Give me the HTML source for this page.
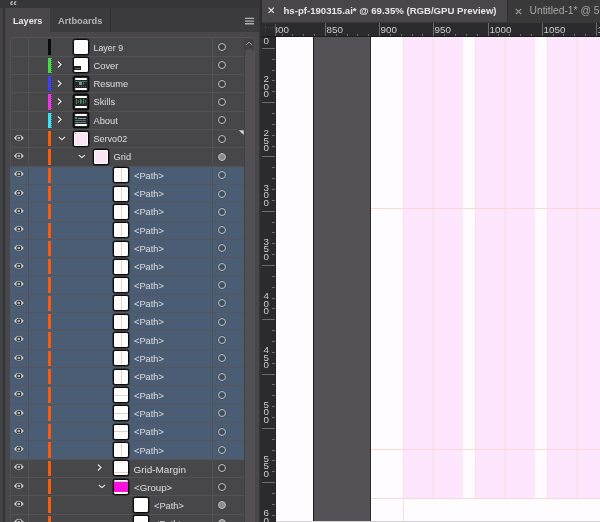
<!DOCTYPE html><html><head><meta charset="utf-8"><style>
*{margin:0;padding:0;box-sizing:border-box}
html,body{width:600px;height:522px;overflow:hidden;background:#464646;font-family:"Liberation Sans",sans-serif}
#root{position:absolute;left:0;top:0;width:600px;height:522px;will-change:transform}
.a{position:absolute}
#topstrip{left:0;top:0;width:259px;height:8.4px;background:#363538}
#lstrip{left:0;top:8px;width:3px;height:514px;background:#434245}
#lstrip2{left:3px;top:8px;width:2px;height:514px;background:#343337}
#panel{left:5px;top:8px;width:254px;height:514px;background:#49474a}
#tabs{left:5px;top:8px;width:254px;height:24px;background:#3b3a3d}
#tabL{left:5px;top:8px;width:45px;height:24px;background:#49474a}
.tabt{font-size:9.3px;line-height:12px;white-space:nowrap}
#divstrip{left:259px;top:0;width:3px;height:522px;background:linear-gradient(90deg,#3a393c,#2e2d30 50%,#2a2a2c)}
#doctabs{left:262px;top:0;width:338px;height:23px;background:#393939}
#doctabA{left:262px;top:0;width:245px;height:22px;background:#484649}
#hruler{left:262px;top:23px;width:338px;height:14px;background:#2b2a2c}
#vruler{left:262px;top:37px;width:14px;height:485px;background:#2b2a2c}
#canvas{left:276px;top:37px;width:324px;height:485px;background:#fefcfe}
.rowbg{left:10px;width:234px;}
.txt{font-size:9.3px;color:#d8d8d8;white-space:nowrap;line-height:11px;-webkit-text-stroke:0.05px #d8d8d8}
.bar{width:3px}
.th{width:16px;height:16px;border:1.2px solid #080808;border-radius:2.2px;background:#fff;overflow:hidden;box-shadow:0 0 0 0.5px #1a1a1a}
.circ{width:8px;height:8px;border:1.25px solid #c4c4c4;border-radius:50%;background:rgba(15,15,20,0.2);box-shadow:0 0 0 0.6px rgba(30,30,30,0.45)}
.rt{font-size:9.8px;color:#cfcfcf;line-height:10px;white-space:nowrap}
</style></head><body><div id="root"><div class="a" id="topstrip"></div>
<div class="a" id="lstrip"></div><div class="a" id="lstrip2"></div>
<div class="a" id="panel"></div>
<div class="a" id="tabs"></div><div class="a" id="tabL"></div>
<svg class="a" style="left:9.8px;top:0.8px" width="7" height="4.6" viewBox="0 0 7 4.6"><path d="M2.7 0.4 Q0.6 1.6 0.9 2.3 Q0.6 3 2.7 4.2 M6.2 0.4 Q4.1 1.6 4.4 2.3 Q4.1 3 6.2 4.2" stroke="#bcbcbc" stroke-width="1.3" fill="none"/></svg>
<div class="a tabt" style="left:13px;top:14.5px;color:#e8e8e8;font-weight:bold;font-size:9.1px">Layers</div>
<div class="a tabt" style="left:58px;top:14.5px;color:#b4b4b4;font-weight:bold;font-size:9.3px">Artboards</div>
<div class="a" style="left:110px;top:8px;width:1px;height:24px;background:#2f2f2f"></div>
<svg class="a" style="left:245px;top:16.5px" width="9" height="8" viewBox="0 0 9 8"><path d="M0 1.45H9M0 4.1H9M0 6.75H9" stroke="#b0b0b4" stroke-width="1.3"/></svg>
<div class="a" style="left:10px;top:37px;width:245px;height:490px;border:1px solid #535353;border-radius:3px;background:#474649"></div>
<div class="a rowbg" style="top:166.04px;height:293.12px;background:#4b5d74"></div>
<div class="a" style="left:10px;top:55.62px;width:234px;height:1px;background:#525154"></div>
<div class="a" style="left:10px;top:73.94px;width:234px;height:1px;background:#525154"></div>
<div class="a" style="left:10px;top:92.26px;width:234px;height:1px;background:#525154"></div>
<div class="a" style="left:10px;top:110.58px;width:234px;height:1px;background:#525154"></div>
<div class="a" style="left:10px;top:128.90px;width:234px;height:1px;background:#525154"></div>
<div class="a" style="left:10px;top:147.22px;width:234px;height:1px;background:#525154"></div>
<div class="a" style="left:10px;top:165.54px;width:234px;height:1px;background:#525154"></div>
<div class="a" style="left:10px;top:183.86px;width:234px;height:1px;background:#57565a"></div>
<div class="a" style="left:10px;top:202.18px;width:234px;height:1px;background:#57565a"></div>
<div class="a" style="left:10px;top:220.50px;width:234px;height:1px;background:#57565a"></div>
<div class="a" style="left:10px;top:238.82px;width:234px;height:1px;background:#57565a"></div>
<div class="a" style="left:10px;top:257.14px;width:234px;height:1px;background:#57565a"></div>
<div class="a" style="left:10px;top:275.46px;width:234px;height:1px;background:#57565a"></div>
<div class="a" style="left:10px;top:293.78px;width:234px;height:1px;background:#57565a"></div>
<div class="a" style="left:10px;top:312.10px;width:234px;height:1px;background:#57565a"></div>
<div class="a" style="left:10px;top:330.42px;width:234px;height:1px;background:#57565a"></div>
<div class="a" style="left:10px;top:348.74px;width:234px;height:1px;background:#57565a"></div>
<div class="a" style="left:10px;top:367.06px;width:234px;height:1px;background:#57565a"></div>
<div class="a" style="left:10px;top:385.38px;width:234px;height:1px;background:#57565a"></div>
<div class="a" style="left:10px;top:403.70px;width:234px;height:1px;background:#57565a"></div>
<div class="a" style="left:10px;top:422.02px;width:234px;height:1px;background:#57565a"></div>
<div class="a" style="left:10px;top:440.34px;width:234px;height:1px;background:#57565a"></div>
<div class="a" style="left:10px;top:458.66px;width:234px;height:1px;background:#57565a"></div>
<div class="a" style="left:10px;top:476.98px;width:234px;height:1px;background:#525154"></div>
<div class="a" style="left:10px;top:495.30px;width:234px;height:1px;background:#525154"></div>
<div class="a" style="left:10px;top:513.62px;width:234px;height:1px;background:#525154"></div>
<div class="a" style="left:10px;top:531.94px;width:234px;height:1px;background:#525154"></div>
<div class="a bar" style="left:48px;top:39.30px;height:15.32px;background:#0a0a0a"></div>
<div class="a th" style="left:73.3px;top:39.00px;background:#fff"></div>
<div class="a txt" style="left:93.5px;top:42.50px;font-size:8.9px">Layer 9</div>
<div class="a circ" style="left:217.8px;top:42.96px"></div>
<div class="a bar" style="left:48px;top:57.62px;height:15.32px;background:#46dc46"></div>
<div class="a" style="left:51px;top:57.62px;width:1px;height:15.32px;background:repeating-linear-gradient(180deg,#46dc46 0 1px,#303030 1px 2px);opacity:0.75"></div>
<svg class="a" style="left:57.0px;top:61.42px" width="6" height="7" viewBox="0 0 6 7"><path d="M0.9 0.6 L4 3.5 L0.9 6.4" stroke="#1e1e1e" stroke-opacity="0.5" stroke-width="2.6" fill="none"/><path d="M0.9 0.6 L4 3.5 L0.9 6.4" stroke="#e2e2e2" stroke-width="1.35" fill="none"/></svg>
<div class="a th" style="left:73.3px;top:57.32px;background:#fff"><div class="a" style="left:0;top:7.2px;width:6.8px;height:4.8px;background:#1e1e1e"></div><div class="a" style="left:0.5px;top:9.2px;width:5.5px;height:1px;background:#666"></div></div>
<div class="a txt" style="left:93.5px;top:60.82px;font-size:9.3px">Cover</div>
<div class="a circ" style="left:217.8px;top:61.28px"></div>
<div class="a bar" style="left:48px;top:75.94px;height:15.32px;background:#4040f0"></div>
<div class="a" style="left:51px;top:75.94px;width:1px;height:15.32px;background:repeating-linear-gradient(180deg,#4040f0 0 1px,#303030 1px 2px);opacity:0.75"></div>
<svg class="a" style="left:57.0px;top:79.74px" width="6" height="7" viewBox="0 0 6 7"><path d="M0.9 0.6 L4 3.5 L0.9 6.4" stroke="#1e1e1e" stroke-opacity="0.5" stroke-width="2.6" fill="none"/><path d="M0.9 0.6 L4 3.5 L0.9 6.4" stroke="#e2e2e2" stroke-width="1.35" fill="none"/></svg>
<div class="a th" style="left:73.3px;top:75.64px;background:#262626"><div class="a" style="left:1px;top:1px;width:12px;height:2px;background:#fff;border-radius:1px"></div><div class="a" style="left:1px;top:11px;width:12px;height:2px;background:#fff;border-radius:1px"></div><div class="a" style="left:1px;top:4px;width:12px;height:1px;background:repeating-linear-gradient(90deg,#2a5a9a 0 1px,#2a8a4a 1px 2px)"></div><div class="a" style="left:5px;top:5px;width:3px;height:3px;background:#8a8a8a"></div><div class="a" style="left:9px;top:5px;width:1px;height:3px;background:#2a7a3a"></div><div class="a" style="left:1px;top:9.5px;width:12px;height:1px;background:repeating-linear-gradient(90deg,#555 0 1px,transparent 1px 2px)"></div></div>
<div class="a txt" style="left:93.5px;top:79.14px;font-size:9.3px">Resume</div>
<div class="a circ" style="left:217.8px;top:79.60px"></div>
<div class="a bar" style="left:48px;top:94.26px;height:15.32px;background:#e838e0"></div>
<div class="a" style="left:51px;top:94.26px;width:1px;height:15.32px;background:repeating-linear-gradient(180deg,#e838e0 0 1px,#303030 1px 2px);opacity:0.75"></div>
<svg class="a" style="left:57.0px;top:98.06px" width="6" height="7" viewBox="0 0 6 7"><path d="M0.9 0.6 L4 3.5 L0.9 6.4" stroke="#1e1e1e" stroke-opacity="0.5" stroke-width="2.6" fill="none"/><path d="M0.9 0.6 L4 3.5 L0.9 6.4" stroke="#e2e2e2" stroke-width="1.35" fill="none"/></svg>
<div class="a th" style="left:73.3px;top:93.96px;background:#262626"><div class="a" style="left:1px;top:1px;width:12px;height:2px;background:#fff;border-radius:1px"></div><div class="a" style="left:1px;top:11px;width:12px;height:2px;background:#fff;border-radius:1px"></div><div class="a" style="left:2px;top:4.5px;width:1.2px;height:5px;background:#2e9a52"></div><div class="a" style="left:3.5px;top:5.5px;width:1px;height:3px;background:#6a5a7a"></div><div class="a" style="left:5.5px;top:4.5px;width:1.2px;height:5px;background:#2e9a52"></div><div class="a" style="left:7.0px;top:5.5px;width:1px;height:3px;background:#6a5a7a"></div><div class="a" style="left:9px;top:4.5px;width:1.2px;height:5px;background:#2e9a52"></div><div class="a" style="left:10.5px;top:5.5px;width:1px;height:3px;background:#6a5a7a"></div></div>
<div class="a txt" style="left:93.5px;top:97.46px;font-size:9.3px">Skills</div>
<div class="a circ" style="left:217.8px;top:97.92px"></div>
<div class="a bar" style="left:48px;top:112.58px;height:15.32px;background:#40e0f0"></div>
<div class="a" style="left:51px;top:112.58px;width:1px;height:15.32px;background:repeating-linear-gradient(180deg,#40e0f0 0 1px,#303030 1px 2px);opacity:0.75"></div>
<svg class="a" style="left:57.0px;top:116.38px" width="6" height="7" viewBox="0 0 6 7"><path d="M0.9 0.6 L4 3.5 L0.9 6.4" stroke="#1e1e1e" stroke-opacity="0.5" stroke-width="2.6" fill="none"/><path d="M0.9 0.6 L4 3.5 L0.9 6.4" stroke="#e2e2e2" stroke-width="1.35" fill="none"/></svg>
<div class="a th" style="left:73.3px;top:112.28px;background:#262626"><div class="a" style="left:1px;top:1px;width:12px;height:2px;background:#fff;border-radius:1px"></div><div class="a" style="left:1px;top:11px;width:12px;height:2px;background:#fff;border-radius:1px"></div><div class="a" style="left:1px;top:4px;width:2px;height:2px;background:#3a9a6a"></div><div class="a" style="left:4px;top:4.5px;width:8px;height:1px;background:#8a9aa8"></div><div class="a" style="left:1px;top:6.5px;width:11px;height:1px;background:#6a6a6a"></div><div class="a" style="left:1px;top:8.5px;width:11px;height:1px;background:#4a8a9a"></div></div>
<div class="a txt" style="left:93.5px;top:115.78px;font-size:9.3px">About</div>
<div class="a circ" style="left:217.8px;top:116.24px"></div>
<svg class="a" style="left:13px;top:133.70px" width="12" height="8" viewBox="0 0 12 8"><path d="M0.1 4 Q5.85 -3.2 11.6 4 Q5.85 11.2 0.1 4Z" fill="#262626" fill-opacity="0.55"/><path d="M0.8 4 Q5.85 -2.4 10.9 4 Q5.85 10.4 0.8 4Z" fill="#d2d2d2"/><circle cx="5.85" cy="4" r="2.5" fill="#2c2c2c"/><circle cx="5.8" cy="4" r="1.3" fill="#bdbdbd"/></svg>
<div class="a bar" style="left:48px;top:130.90px;height:15.32px;background:#fa5c0c"></div>
<svg class="a" style="left:58.0px;top:135.90px" width="8" height="5" viewBox="0 0 8 5"><path d="M0.8 1 L3.9 3.7 L7 1" stroke="#1e1e1e" stroke-opacity="0.5" stroke-width="2.6" fill="none"/><path d="M0.8 1 L3.9 3.7 L7 1" stroke="#e2e2e2" stroke-width="1.35" fill="none"/></svg>
<div class="a th" style="left:73.3px;top:130.60px;background:#fff"><div class="a" style="left:1px;top:1px;width:12px;height:12px;background:#fbe4f6"></div><div class="a" style="left:1px;top:1px;width:1px;height:1px;background:#888"></div></div>
<div class="a txt" style="left:93.5px;top:134.10px;font-size:9.05px">Servo02</div>
<div class="a circ" style="left:217.8px;top:134.56px"></div>
<svg class="a" style="left:13px;top:152.02px" width="12" height="8" viewBox="0 0 12 8"><path d="M0.1 4 Q5.85 -3.2 11.6 4 Q5.85 11.2 0.1 4Z" fill="#262626" fill-opacity="0.55"/><path d="M0.8 4 Q5.85 -2.4 10.9 4 Q5.85 10.4 0.8 4Z" fill="#d2d2d2"/><circle cx="5.85" cy="4" r="2.5" fill="#2c2c2c"/><circle cx="5.8" cy="4" r="1.3" fill="#bdbdbd"/></svg>
<div class="a bar" style="left:48px;top:149.22px;height:15.32px;background:#fa5c0c"></div>
<svg class="a" style="left:78.0px;top:154.22px" width="8" height="5" viewBox="0 0 8 5"><path d="M0.8 1 L3.9 3.7 L7 1" stroke="#1e1e1e" stroke-opacity="0.5" stroke-width="2.6" fill="none"/><path d="M0.8 1 L3.9 3.7 L7 1" stroke="#e2e2e2" stroke-width="1.35" fill="none"/></svg>
<div class="a th" style="left:93.3px;top:148.92px;background:#fff"><div class="a" style="left:1px;top:1px;width:12px;height:12px;background:#fbe4f6"></div></div>
<div class="a txt" style="left:113.5px;top:152.42px;font-size:9.3px">Grid</div>
<div class="a circ" style="left:217.8px;top:152.88px;background:#8a8a8a"></div>
<svg class="a" style="left:13px;top:170.34px" width="12" height="8" viewBox="0 0 12 8"><path d="M0.1 4 Q5.85 -3.2 11.6 4 Q5.85 11.2 0.1 4Z" fill="#262626" fill-opacity="0.55"/><path d="M0.8 4 Q5.85 -2.4 10.9 4 Q5.85 10.4 0.8 4Z" fill="#d2d2d2"/><circle cx="5.85" cy="4" r="2.5" fill="#2c2c2c"/><circle cx="5.8" cy="4" r="1.3" fill="#bdbdbd"/></svg>
<div class="a bar" style="left:48px;top:167.54px;height:15.32px;background:#fa5c0c"></div>
<div class="a th" style="left:113.3px;top:167.24px;background:#fff"><div class="a" style="left:6.6px;top:0;width:1px;height:14px;background:#f4cccc"></div></div>
<div class="a txt" style="left:134.0px;top:170.74px;font-size:9.25px">&lt;Path&gt;</div>
<div class="a circ" style="left:217.8px;top:171.20px"></div>
<svg class="a" style="left:13px;top:188.66px" width="12" height="8" viewBox="0 0 12 8"><path d="M0.1 4 Q5.85 -3.2 11.6 4 Q5.85 11.2 0.1 4Z" fill="#262626" fill-opacity="0.55"/><path d="M0.8 4 Q5.85 -2.4 10.9 4 Q5.85 10.4 0.8 4Z" fill="#d2d2d2"/><circle cx="5.85" cy="4" r="2.5" fill="#2c2c2c"/><circle cx="5.8" cy="4" r="1.3" fill="#bdbdbd"/></svg>
<div class="a bar" style="left:48px;top:185.86px;height:15.32px;background:#fa5c0c"></div>
<div class="a th" style="left:113.3px;top:185.56px;background:#fff"><div class="a" style="left:6.6px;top:0;width:1px;height:14px;background:#f4cccc"></div></div>
<div class="a txt" style="left:134.0px;top:189.06px;font-size:9.25px">&lt;Path&gt;</div>
<div class="a circ" style="left:217.8px;top:189.52px"></div>
<svg class="a" style="left:13px;top:206.98px" width="12" height="8" viewBox="0 0 12 8"><path d="M0.1 4 Q5.85 -3.2 11.6 4 Q5.85 11.2 0.1 4Z" fill="#262626" fill-opacity="0.55"/><path d="M0.8 4 Q5.85 -2.4 10.9 4 Q5.85 10.4 0.8 4Z" fill="#d2d2d2"/><circle cx="5.85" cy="4" r="2.5" fill="#2c2c2c"/><circle cx="5.8" cy="4" r="1.3" fill="#bdbdbd"/></svg>
<div class="a bar" style="left:48px;top:204.18px;height:15.32px;background:#fa5c0c"></div>
<div class="a th" style="left:113.3px;top:203.88px;background:#fff"><div class="a" style="left:6.6px;top:0;width:1px;height:14px;background:#f4cccc"></div></div>
<div class="a txt" style="left:134.0px;top:207.38px;font-size:9.25px">&lt;Path&gt;</div>
<div class="a circ" style="left:217.8px;top:207.84px"></div>
<svg class="a" style="left:13px;top:225.30px" width="12" height="8" viewBox="0 0 12 8"><path d="M0.1 4 Q5.85 -3.2 11.6 4 Q5.85 11.2 0.1 4Z" fill="#262626" fill-opacity="0.55"/><path d="M0.8 4 Q5.85 -2.4 10.9 4 Q5.85 10.4 0.8 4Z" fill="#d2d2d2"/><circle cx="5.85" cy="4" r="2.5" fill="#2c2c2c"/><circle cx="5.8" cy="4" r="1.3" fill="#bdbdbd"/></svg>
<div class="a bar" style="left:48px;top:222.50px;height:15.32px;background:#fa5c0c"></div>
<div class="a th" style="left:113.3px;top:222.20px;background:#fff"><div class="a" style="left:6.6px;top:0;width:1px;height:14px;background:#f4cccc"></div></div>
<div class="a txt" style="left:134.0px;top:225.70px;font-size:9.25px">&lt;Path&gt;</div>
<div class="a circ" style="left:217.8px;top:226.16px"></div>
<svg class="a" style="left:13px;top:243.62px" width="12" height="8" viewBox="0 0 12 8"><path d="M0.1 4 Q5.85 -3.2 11.6 4 Q5.85 11.2 0.1 4Z" fill="#262626" fill-opacity="0.55"/><path d="M0.8 4 Q5.85 -2.4 10.9 4 Q5.85 10.4 0.8 4Z" fill="#d2d2d2"/><circle cx="5.85" cy="4" r="2.5" fill="#2c2c2c"/><circle cx="5.8" cy="4" r="1.3" fill="#bdbdbd"/></svg>
<div class="a bar" style="left:48px;top:240.82px;height:15.32px;background:#fa5c0c"></div>
<div class="a th" style="left:113.3px;top:240.52px;background:#fff"><div class="a" style="left:6.6px;top:0;width:1px;height:14px;background:#f4cccc"></div></div>
<div class="a txt" style="left:134.0px;top:244.02px;font-size:9.25px">&lt;Path&gt;</div>
<div class="a circ" style="left:217.8px;top:244.48px"></div>
<svg class="a" style="left:13px;top:261.94px" width="12" height="8" viewBox="0 0 12 8"><path d="M0.1 4 Q5.85 -3.2 11.6 4 Q5.85 11.2 0.1 4Z" fill="#262626" fill-opacity="0.55"/><path d="M0.8 4 Q5.85 -2.4 10.9 4 Q5.85 10.4 0.8 4Z" fill="#d2d2d2"/><circle cx="5.85" cy="4" r="2.5" fill="#2c2c2c"/><circle cx="5.8" cy="4" r="1.3" fill="#bdbdbd"/></svg>
<div class="a bar" style="left:48px;top:259.14px;height:15.32px;background:#fa5c0c"></div>
<div class="a th" style="left:113.3px;top:258.84px;background:#fff"><div class="a" style="left:6.6px;top:0;width:1px;height:14px;background:#f4cccc"></div></div>
<div class="a txt" style="left:134.0px;top:262.34px;font-size:9.25px">&lt;Path&gt;</div>
<div class="a circ" style="left:217.8px;top:262.80px"></div>
<svg class="a" style="left:13px;top:280.26px" width="12" height="8" viewBox="0 0 12 8"><path d="M0.1 4 Q5.85 -3.2 11.6 4 Q5.85 11.2 0.1 4Z" fill="#262626" fill-opacity="0.55"/><path d="M0.8 4 Q5.85 -2.4 10.9 4 Q5.85 10.4 0.8 4Z" fill="#d2d2d2"/><circle cx="5.85" cy="4" r="2.5" fill="#2c2c2c"/><circle cx="5.8" cy="4" r="1.3" fill="#bdbdbd"/></svg>
<div class="a bar" style="left:48px;top:277.46px;height:15.32px;background:#fa5c0c"></div>
<div class="a th" style="left:113.3px;top:277.16px;background:#fff"><div class="a" style="left:6.6px;top:0;width:1px;height:14px;background:#f4cccc"></div></div>
<div class="a txt" style="left:134.0px;top:280.66px;font-size:9.25px">&lt;Path&gt;</div>
<div class="a circ" style="left:217.8px;top:281.12px"></div>
<svg class="a" style="left:13px;top:298.58px" width="12" height="8" viewBox="0 0 12 8"><path d="M0.1 4 Q5.85 -3.2 11.6 4 Q5.85 11.2 0.1 4Z" fill="#262626" fill-opacity="0.55"/><path d="M0.8 4 Q5.85 -2.4 10.9 4 Q5.85 10.4 0.8 4Z" fill="#d2d2d2"/><circle cx="5.85" cy="4" r="2.5" fill="#2c2c2c"/><circle cx="5.8" cy="4" r="1.3" fill="#bdbdbd"/></svg>
<div class="a bar" style="left:48px;top:295.78px;height:15.32px;background:#fa5c0c"></div>
<div class="a th" style="left:113.3px;top:295.48px;background:#fff"><div class="a" style="left:6.6px;top:0;width:1px;height:14px;background:#f4cccc"></div></div>
<div class="a txt" style="left:134.0px;top:298.98px;font-size:9.25px">&lt;Path&gt;</div>
<div class="a circ" style="left:217.8px;top:299.44px"></div>
<svg class="a" style="left:13px;top:316.90px" width="12" height="8" viewBox="0 0 12 8"><path d="M0.1 4 Q5.85 -3.2 11.6 4 Q5.85 11.2 0.1 4Z" fill="#262626" fill-opacity="0.55"/><path d="M0.8 4 Q5.85 -2.4 10.9 4 Q5.85 10.4 0.8 4Z" fill="#d2d2d2"/><circle cx="5.85" cy="4" r="2.5" fill="#2c2c2c"/><circle cx="5.8" cy="4" r="1.3" fill="#bdbdbd"/></svg>
<div class="a bar" style="left:48px;top:314.10px;height:15.32px;background:#fa5c0c"></div>
<div class="a th" style="left:113.3px;top:313.80px;background:#fff"><div class="a" style="left:6.6px;top:0;width:1px;height:14px;background:#f4cccc"></div></div>
<div class="a txt" style="left:134.0px;top:317.30px;font-size:9.25px">&lt;Path&gt;</div>
<div class="a circ" style="left:217.8px;top:317.76px"></div>
<svg class="a" style="left:13px;top:335.22px" width="12" height="8" viewBox="0 0 12 8"><path d="M0.1 4 Q5.85 -3.2 11.6 4 Q5.85 11.2 0.1 4Z" fill="#262626" fill-opacity="0.55"/><path d="M0.8 4 Q5.85 -2.4 10.9 4 Q5.85 10.4 0.8 4Z" fill="#d2d2d2"/><circle cx="5.85" cy="4" r="2.5" fill="#2c2c2c"/><circle cx="5.8" cy="4" r="1.3" fill="#bdbdbd"/></svg>
<div class="a bar" style="left:48px;top:332.42px;height:15.32px;background:#fa5c0c"></div>
<div class="a th" style="left:113.3px;top:332.12px;background:#fff"><div class="a" style="left:6.6px;top:0;width:1px;height:14px;background:#f4cccc"></div></div>
<div class="a txt" style="left:134.0px;top:335.62px;font-size:9.25px">&lt;Path&gt;</div>
<div class="a circ" style="left:217.8px;top:336.08px"></div>
<svg class="a" style="left:13px;top:353.54px" width="12" height="8" viewBox="0 0 12 8"><path d="M0.1 4 Q5.85 -3.2 11.6 4 Q5.85 11.2 0.1 4Z" fill="#262626" fill-opacity="0.55"/><path d="M0.8 4 Q5.85 -2.4 10.9 4 Q5.85 10.4 0.8 4Z" fill="#d2d2d2"/><circle cx="5.85" cy="4" r="2.5" fill="#2c2c2c"/><circle cx="5.8" cy="4" r="1.3" fill="#bdbdbd"/></svg>
<div class="a bar" style="left:48px;top:350.74px;height:15.32px;background:#fa5c0c"></div>
<div class="a th" style="left:113.3px;top:350.44px;background:#fff"><div class="a" style="left:6.6px;top:0;width:1px;height:14px;background:#f4cccc"></div></div>
<div class="a txt" style="left:134.0px;top:353.94px;font-size:9.25px">&lt;Path&gt;</div>
<div class="a circ" style="left:217.8px;top:354.40px"></div>
<svg class="a" style="left:13px;top:371.86px" width="12" height="8" viewBox="0 0 12 8"><path d="M0.1 4 Q5.85 -3.2 11.6 4 Q5.85 11.2 0.1 4Z" fill="#262626" fill-opacity="0.55"/><path d="M0.8 4 Q5.85 -2.4 10.9 4 Q5.85 10.4 0.8 4Z" fill="#d2d2d2"/><circle cx="5.85" cy="4" r="2.5" fill="#2c2c2c"/><circle cx="5.8" cy="4" r="1.3" fill="#bdbdbd"/></svg>
<div class="a bar" style="left:48px;top:369.06px;height:15.32px;background:#fa5c0c"></div>
<div class="a th" style="left:113.3px;top:368.76px;background:#fff"><div class="a" style="left:6.6px;top:0;width:1px;height:14px;background:#f4cccc"></div></div>
<div class="a txt" style="left:134.0px;top:372.26px;font-size:9.25px">&lt;Path&gt;</div>
<div class="a circ" style="left:217.8px;top:372.72px"></div>
<svg class="a" style="left:13px;top:390.18px" width="12" height="8" viewBox="0 0 12 8"><path d="M0.1 4 Q5.85 -3.2 11.6 4 Q5.85 11.2 0.1 4Z" fill="#262626" fill-opacity="0.55"/><path d="M0.8 4 Q5.85 -2.4 10.9 4 Q5.85 10.4 0.8 4Z" fill="#d2d2d2"/><circle cx="5.85" cy="4" r="2.5" fill="#2c2c2c"/><circle cx="5.8" cy="4" r="1.3" fill="#bdbdbd"/></svg>
<div class="a bar" style="left:48px;top:387.38px;height:15.32px;background:#fa5c0c"></div>
<div class="a th" style="left:113.3px;top:387.08px;background:#fff"><div class="a" style="left:0;top:6.5px;width:8px;height:1px;background:#f6c8c0"></div><div class="a" style="left:8px;top:6.5px;width:6px;height:1px;background:#d8d8e0"></div></div>
<div class="a txt" style="left:134.0px;top:390.58px;font-size:9.25px">&lt;Path&gt;</div>
<div class="a circ" style="left:217.8px;top:391.04px"></div>
<svg class="a" style="left:13px;top:408.50px" width="12" height="8" viewBox="0 0 12 8"><path d="M0.1 4 Q5.85 -3.2 11.6 4 Q5.85 11.2 0.1 4Z" fill="#262626" fill-opacity="0.55"/><path d="M0.8 4 Q5.85 -2.4 10.9 4 Q5.85 10.4 0.8 4Z" fill="#d2d2d2"/><circle cx="5.85" cy="4" r="2.5" fill="#2c2c2c"/><circle cx="5.8" cy="4" r="1.3" fill="#bdbdbd"/></svg>
<div class="a bar" style="left:48px;top:405.70px;height:15.32px;background:#fa5c0c"></div>
<div class="a th" style="left:113.3px;top:405.40px;background:#fff"><div class="a" style="left:0;top:6.5px;width:8px;height:1px;background:#f6c8c0"></div><div class="a" style="left:8px;top:6.5px;width:6px;height:1px;background:#d8d8e0"></div></div>
<div class="a txt" style="left:134.0px;top:408.90px;font-size:9.25px">&lt;Path&gt;</div>
<div class="a circ" style="left:217.8px;top:409.36px"></div>
<svg class="a" style="left:13px;top:426.82px" width="12" height="8" viewBox="0 0 12 8"><path d="M0.1 4 Q5.85 -3.2 11.6 4 Q5.85 11.2 0.1 4Z" fill="#262626" fill-opacity="0.55"/><path d="M0.8 4 Q5.85 -2.4 10.9 4 Q5.85 10.4 0.8 4Z" fill="#d2d2d2"/><circle cx="5.85" cy="4" r="2.5" fill="#2c2c2c"/><circle cx="5.8" cy="4" r="1.3" fill="#bdbdbd"/></svg>
<div class="a bar" style="left:48px;top:424.02px;height:15.32px;background:#fa5c0c"></div>
<div class="a th" style="left:113.3px;top:423.72px;background:#fff"><div class="a" style="left:0;top:6.5px;width:8px;height:1px;background:#f6c8c0"></div><div class="a" style="left:8px;top:6.5px;width:6px;height:1px;background:#d8d8e0"></div></div>
<div class="a txt" style="left:134.0px;top:427.22px;font-size:9.25px">&lt;Path&gt;</div>
<div class="a circ" style="left:217.8px;top:427.68px"></div>
<svg class="a" style="left:13px;top:445.14px" width="12" height="8" viewBox="0 0 12 8"><path d="M0.1 4 Q5.85 -3.2 11.6 4 Q5.85 11.2 0.1 4Z" fill="#262626" fill-opacity="0.55"/><path d="M0.8 4 Q5.85 -2.4 10.9 4 Q5.85 10.4 0.8 4Z" fill="#d2d2d2"/><circle cx="5.85" cy="4" r="2.5" fill="#2c2c2c"/><circle cx="5.8" cy="4" r="1.3" fill="#bdbdbd"/></svg>
<div class="a bar" style="left:48px;top:442.34px;height:15.32px;background:#fa5c0c"></div>
<div class="a th" style="left:113.3px;top:442.04px;background:#fff"><div class="a" style="left:6.6px;top:0;width:1px;height:14px;background:#f4cccc"></div></div>
<div class="a txt" style="left:134.0px;top:445.54px;font-size:9.25px">&lt;Path&gt;</div>
<div class="a circ" style="left:217.8px;top:446.00px"></div>
<svg class="a" style="left:13px;top:463.46px" width="12" height="8" viewBox="0 0 12 8"><path d="M0.1 4 Q5.85 -3.2 11.6 4 Q5.85 11.2 0.1 4Z" fill="#262626" fill-opacity="0.55"/><path d="M0.8 4 Q5.85 -2.4 10.9 4 Q5.85 10.4 0.8 4Z" fill="#d2d2d2"/><circle cx="5.85" cy="4" r="2.5" fill="#2c2c2c"/><circle cx="5.8" cy="4" r="1.3" fill="#bdbdbd"/></svg>
<div class="a bar" style="left:48px;top:460.66px;height:15.32px;background:#fa5c0c"></div>
<svg class="a" style="left:97.0px;top:464.46px" width="6" height="7" viewBox="0 0 6 7"><path d="M0.9 0.6 L4 3.5 L0.9 6.4" stroke="#1e1e1e" stroke-opacity="0.5" stroke-width="2.6" fill="none"/><path d="M0.9 0.6 L4 3.5 L0.9 6.4" stroke="#e2e2e2" stroke-width="1.35" fill="none"/></svg>
<div class="a th" style="left:113.3px;top:460.36px;background:#fff"><div class="a" style="left:0;top:11px;width:14px;height:1px;background:#f4cbb8"></div><div class="a" style="left:0;top:1px;width:14px;height:1px;background:#f8eeee"></div></div>
<div class="a txt" style="left:133.5px;top:463.86px;font-size:9.95px">Grid-Margin</div>
<div class="a circ" style="left:217.8px;top:464.32px"></div>
<svg class="a" style="left:13px;top:481.78px" width="12" height="8" viewBox="0 0 12 8"><path d="M0.1 4 Q5.85 -3.2 11.6 4 Q5.85 11.2 0.1 4Z" fill="#262626" fill-opacity="0.55"/><path d="M0.8 4 Q5.85 -2.4 10.9 4 Q5.85 10.4 0.8 4Z" fill="#d2d2d2"/><circle cx="5.85" cy="4" r="2.5" fill="#2c2c2c"/><circle cx="5.8" cy="4" r="1.3" fill="#bdbdbd"/></svg>
<div class="a bar" style="left:48px;top:478.98px;height:15.32px;background:#fa5c0c"></div>
<svg class="a" style="left:98.0px;top:483.98px" width="8" height="5" viewBox="0 0 8 5"><path d="M0.8 1 L3.9 3.7 L7 1" stroke="#1e1e1e" stroke-opacity="0.5" stroke-width="2.6" fill="none"/><path d="M0.8 1 L3.9 3.7 L7 1" stroke="#e2e2e2" stroke-width="1.35" fill="none"/></svg>
<div class="a th" style="left:113.3px;top:478.68px;background:#fff"><div class="a" style="left:0;top:1.5px;width:14px;height:10.5px;background:#fb10dc"></div><div class="a" style="left:0;top:1px;width:14px;height:1px;background:repeating-linear-gradient(90deg,#f8a0e8 0 1px,#fff 1px 2px)"></div></div>
<div class="a txt" style="left:134.0px;top:482.18px;font-size:9.7px">&lt;Group&gt;</div>
<div class="a circ" style="left:217.8px;top:482.64px"></div>
<svg class="a" style="left:13px;top:500.10px" width="12" height="8" viewBox="0 0 12 8"><path d="M0.1 4 Q5.85 -3.2 11.6 4 Q5.85 11.2 0.1 4Z" fill="#262626" fill-opacity="0.55"/><path d="M0.8 4 Q5.85 -2.4 10.9 4 Q5.85 10.4 0.8 4Z" fill="#d2d2d2"/><circle cx="5.85" cy="4" r="2.5" fill="#2c2c2c"/><circle cx="5.8" cy="4" r="1.3" fill="#bdbdbd"/></svg>
<div class="a bar" style="left:48px;top:497.30px;height:15.32px;background:#fa5c0c"></div>
<div class="a th" style="left:133.3px;top:497.00px;background:#fff"></div>
<div class="a txt" style="left:154.0px;top:500.50px;font-size:9.25px">&lt;Path&gt;</div>
<div class="a circ" style="left:217.8px;top:500.96px;background:#8a8a8a"></div>
<svg class="a" style="left:13px;top:518.42px" width="12" height="8" viewBox="0 0 12 8"><path d="M0.1 4 Q5.85 -3.2 11.6 4 Q5.85 11.2 0.1 4Z" fill="#262626" fill-opacity="0.55"/><path d="M0.8 4 Q5.85 -2.4 10.9 4 Q5.85 10.4 0.8 4Z" fill="#d2d2d2"/><circle cx="5.85" cy="4" r="2.5" fill="#2c2c2c"/><circle cx="5.8" cy="4" r="1.3" fill="#bdbdbd"/></svg>
<div class="a bar" style="left:48px;top:515.62px;height:15.32px;background:#fa5c0c"></div>
<div class="a th" style="left:133.3px;top:515.32px;background:#fff"></div>
<div class="a txt" style="left:154.0px;top:518.82px;font-size:9.25px">&lt;Path&gt;</div>
<div class="a circ" style="left:217.8px;top:519.28px;background:#8a8a8a"></div>
<div class="a" style="left:28px;top:38px;width:1px;height:485px;background:#525154"></div>
<div class="a" style="left:212px;top:38px;width:1px;height:485px;background:#525154"></div>
<svg class="a" style="left:237px;top:129px" width="8" height="7" viewBox="0 0 8 7"><path d="M1 1 H7 V6.5Z" fill="#d8d8d8" stroke="#222" stroke-width="0.5"/></svg>
<div class="a" style="left:244px;top:38.5px;width:10px;height:484px;background:#404040"></div>
<svg class="a" style="left:244.5px;top:40.5px" width="8" height="5" viewBox="0 0 8 5"><path d="M0.8 4.2 L4 1 L7.2 4.2" stroke="#9c9c9c" stroke-width="1" fill="none"/></svg>
<div class="a" style="left:245px;top:49px;width:8.6px;height:480px;background:#525054;border-radius:4.3px"></div>
<div class="a" id="divstrip"></div>
<div class="a" id="doctabs"></div><div class="a" id="doctabA"></div>
<div class="a" style="left:507px;top:0;width:1px;height:22px;background:#2e2e2e"></div>
<svg class="a" style="left:268.2px;top:7.2px" width="6.5" height="6.5" viewBox="0 0 6.5 6.5"><path d="M0.6 0.6 L5.9 5.9 M5.9 0.6 L0.6 5.9" stroke="#e4e4e4" stroke-width="1.25"/></svg>
<div class="a tabt" style="left:283.5px;top:5px;color:#e6e6e6;font-weight:bold;font-size:9.6px;letter-spacing:0px">hs-pf-190315.ai* @ 69.35% (RGB/GPU Preview)</div>
<svg class="a" style="left:514.5px;top:7.5px" width="7" height="7" viewBox="0 0 7 7"><path d="M0.8 0.8 L6.2 6.2 M6.2 0.8 L0.8 6.2" stroke="#a0a0a0" stroke-width="1.1"/></svg>
<div class="a tabt" style="left:529.5px;top:5px;color:#a6a6a6;font-size:10.3px">Untitled-1* @ 50</div>
<div class="a" id="hruler"></div><div class="a" id="vruler"></div>
<div class="a" style="left:271px;top:23px;width:1px;height:13px;background:#6c6c6c"></div>
<div class="a rt" style="left:272.6px;top:24.6px">800</div>
<div class="a" style="left:282px;top:34px;width:1px;height:2px;background:#707070"></div>
<div class="a" style="left:292px;top:34px;width:1px;height:2px;background:#707070"></div>
<div class="a" style="left:303px;top:34px;width:1px;height:2px;background:#707070"></div>
<div class="a" style="left:314px;top:34px;width:1px;height:2px;background:#707070"></div>
<div class="a" style="left:325px;top:23px;width:1px;height:13px;background:#6c6c6c"></div>
<div class="a rt" style="left:326.6px;top:24.6px">850</div>
<div class="a" style="left:336px;top:34px;width:1px;height:2px;background:#707070"></div>
<div class="a" style="left:347px;top:34px;width:1px;height:2px;background:#707070"></div>
<div class="a" style="left:357px;top:34px;width:1px;height:2px;background:#707070"></div>
<div class="a" style="left:368px;top:34px;width:1px;height:2px;background:#707070"></div>
<div class="a" style="left:379px;top:23px;width:1px;height:13px;background:#6c6c6c"></div>
<div class="a rt" style="left:380.6px;top:24.6px">900</div>
<div class="a" style="left:390px;top:34px;width:1px;height:2px;background:#707070"></div>
<div class="a" style="left:401px;top:34px;width:1px;height:2px;background:#707070"></div>
<div class="a" style="left:412px;top:34px;width:1px;height:2px;background:#707070"></div>
<div class="a" style="left:422px;top:34px;width:1px;height:2px;background:#707070"></div>
<div class="a" style="left:433px;top:23px;width:1px;height:13px;background:#6c6c6c"></div>
<div class="a rt" style="left:434.6px;top:24.6px">950</div>
<div class="a" style="left:444px;top:34px;width:1px;height:2px;background:#707070"></div>
<div class="a" style="left:455px;top:34px;width:1px;height:2px;background:#707070"></div>
<div class="a" style="left:466px;top:34px;width:1px;height:2px;background:#707070"></div>
<div class="a" style="left:477px;top:34px;width:1px;height:2px;background:#707070"></div>
<div class="a" style="left:488px;top:23px;width:1px;height:13px;background:#6c6c6c"></div>
<div class="a rt" style="left:489.6px;top:24.6px">1000</div>
<div class="a" style="left:498px;top:34px;width:1px;height:2px;background:#707070"></div>
<div class="a" style="left:509px;top:34px;width:1px;height:2px;background:#707070"></div>
<div class="a" style="left:520px;top:34px;width:1px;height:2px;background:#707070"></div>
<div class="a" style="left:531px;top:34px;width:1px;height:2px;background:#707070"></div>
<div class="a" style="left:542px;top:23px;width:1px;height:13px;background:#6c6c6c"></div>
<div class="a rt" style="left:543.6px;top:24.6px">1050</div>
<div class="a" style="left:553px;top:34px;width:1px;height:2px;background:#707070"></div>
<div class="a" style="left:563px;top:34px;width:1px;height:2px;background:#707070"></div>
<div class="a" style="left:574px;top:34px;width:1px;height:2px;background:#707070"></div>
<div class="a" style="left:585px;top:34px;width:1px;height:2px;background:#707070"></div>
<div class="a" style="left:596px;top:23px;width:1px;height:13px;background:#6c6c6c"></div>
<div class="a rt" style="left:597.6px;top:24.6px">1100</div>
<div class="a" style="left:262px;top:23px;width:14px;height:13px;background:#2b2a2c"></div>
<div class="a" style="left:275px;top:24px;width:1px;height:13px;background:#5a5a5a"></div>
<div class="a" style="left:262px;top:27px;width:13px;height:1px;background:repeating-linear-gradient(90deg,#404042 0 1px,transparent 1px 2px)"></div>
<div class="a" style="left:265px;top:23px;width:1px;height:13px;background:repeating-linear-gradient(180deg,#404042 0 1px,transparent 1px 2px)"></div>
<div class="a" style="left:262px;top:48px;width:13px;height:1px;background:#6c6c6c"></div>
<div class="a" style="left:272px;top:59px;width:3px;height:1px;background:#707070"></div>
<div class="a" style="left:272px;top:70px;width:3px;height:1px;background:#707070"></div>
<div class="a" style="left:272px;top:80px;width:3px;height:1px;background:#707070"></div>
<div class="a" style="left:272px;top:91px;width:3px;height:1px;background:#707070"></div>
<div class="a" style="left:262px;top:102px;width:13px;height:1px;background:#6c6c6c"></div>
<div class="a" style="left:272px;top:113px;width:3px;height:1px;background:#707070"></div>
<div class="a" style="left:272px;top:124px;width:3px;height:1px;background:#707070"></div>
<div class="a" style="left:272px;top:135px;width:3px;height:1px;background:#707070"></div>
<div class="a" style="left:272px;top:146px;width:3px;height:1px;background:#707070"></div>
<div class="a" style="left:262px;top:156px;width:13px;height:1px;background:#6c6c6c"></div>
<div class="a" style="left:272px;top:167px;width:3px;height:1px;background:#707070"></div>
<div class="a" style="left:272px;top:178px;width:3px;height:1px;background:#707070"></div>
<div class="a" style="left:272px;top:189px;width:3px;height:1px;background:#707070"></div>
<div class="a" style="left:272px;top:200px;width:3px;height:1px;background:#707070"></div>
<div class="a" style="left:262px;top:211px;width:13px;height:1px;background:#6c6c6c"></div>
<div class="a" style="left:272px;top:222px;width:3px;height:1px;background:#707070"></div>
<div class="a" style="left:272px;top:232px;width:3px;height:1px;background:#707070"></div>
<div class="a" style="left:272px;top:243px;width:3px;height:1px;background:#707070"></div>
<div class="a" style="left:272px;top:254px;width:3px;height:1px;background:#707070"></div>
<div class="a" style="left:262px;top:265px;width:13px;height:1px;background:#6c6c6c"></div>
<div class="a" style="left:272px;top:276px;width:3px;height:1px;background:#707070"></div>
<div class="a" style="left:272px;top:287px;width:3px;height:1px;background:#707070"></div>
<div class="a" style="left:272px;top:298px;width:3px;height:1px;background:#707070"></div>
<div class="a" style="left:272px;top:308px;width:3px;height:1px;background:#707070"></div>
<div class="a" style="left:262px;top:319px;width:13px;height:1px;background:#6c6c6c"></div>
<div class="a" style="left:272px;top:330px;width:3px;height:1px;background:#707070"></div>
<div class="a" style="left:272px;top:341px;width:3px;height:1px;background:#707070"></div>
<div class="a" style="left:272px;top:352px;width:3px;height:1px;background:#707070"></div>
<div class="a" style="left:272px;top:363px;width:3px;height:1px;background:#707070"></div>
<div class="a" style="left:262px;top:374px;width:13px;height:1px;background:#6c6c6c"></div>
<div class="a" style="left:272px;top:384px;width:3px;height:1px;background:#707070"></div>
<div class="a" style="left:272px;top:395px;width:3px;height:1px;background:#707070"></div>
<div class="a" style="left:272px;top:406px;width:3px;height:1px;background:#707070"></div>
<div class="a" style="left:272px;top:417px;width:3px;height:1px;background:#707070"></div>
<div class="a" style="left:262px;top:428px;width:13px;height:1px;background:#6c6c6c"></div>
<div class="a" style="left:272px;top:439px;width:3px;height:1px;background:#707070"></div>
<div class="a" style="left:272px;top:450px;width:3px;height:1px;background:#707070"></div>
<div class="a" style="left:272px;top:460px;width:3px;height:1px;background:#707070"></div>
<div class="a" style="left:272px;top:471px;width:3px;height:1px;background:#707070"></div>
<div class="a" style="left:262px;top:482px;width:13px;height:1px;background:#6c6c6c"></div>
<div class="a" style="left:272px;top:493px;width:3px;height:1px;background:#707070"></div>
<div class="a" style="left:272px;top:504px;width:3px;height:1px;background:#707070"></div>
<div class="a" style="left:272px;top:515px;width:3px;height:1px;background:#707070"></div>
<div class="a rt" style="left:263.6px;top:35.7px">0</div>
<div class="a rt" style="left:263.6px;top:74.0px">2</div>
<div class="a rt" style="left:263.6px;top:81.5px">0</div>
<div class="a rt" style="left:263.6px;top:89.0px">0</div>
<div class="a rt" style="left:263.6px;top:128.3px">2</div>
<div class="a rt" style="left:263.6px;top:135.8px">5</div>
<div class="a rt" style="left:263.6px;top:143.3px">0</div>
<div class="a rt" style="left:263.6px;top:182.5px">3</div>
<div class="a rt" style="left:263.6px;top:190.0px">0</div>
<div class="a rt" style="left:263.6px;top:197.5px">0</div>
<div class="a rt" style="left:263.6px;top:236.8px">3</div>
<div class="a rt" style="left:263.6px;top:244.3px">5</div>
<div class="a rt" style="left:263.6px;top:251.8px">0</div>
<div class="a rt" style="left:263.6px;top:291.1px">4</div>
<div class="a rt" style="left:263.6px;top:298.6px">0</div>
<div class="a rt" style="left:263.6px;top:306.1px">0</div>
<div class="a rt" style="left:263.6px;top:345.4px">4</div>
<div class="a rt" style="left:263.6px;top:352.9px">5</div>
<div class="a rt" style="left:263.6px;top:360.4px">0</div>
<div class="a rt" style="left:263.6px;top:399.7px">5</div>
<div class="a rt" style="left:263.6px;top:407.2px">0</div>
<div class="a rt" style="left:263.6px;top:414.7px">0</div>
<div class="a rt" style="left:263.6px;top:453.9px">5</div>
<div class="a rt" style="left:263.6px;top:461.4px">5</div>
<div class="a rt" style="left:263.6px;top:468.9px">0</div>
<div class="a rt" style="left:263.6px;top:508.2px">6</div>
<div class="a rt" style="left:263.6px;top:515.7px">0</div>
<div class="a rt" style="left:263.6px;top:523.2px">0</div>
<div class="a" id="canvas"></div>
<div class="a" style="left:313px;top:37px;width:1px;height:485px;background:#1a1a1a"></div>
<div class="a" style="left:262px;top:36px;width:338px;height:1px;background:#1c1c1c"></div>
<div class="a" style="left:275px;top:37px;width:1px;height:485px;background:#242424"></div>
<div class="a" style="left:314px;top:37px;width:57px;height:485px;background:#545256"></div>
<div class="a" style="left:370px;top:37px;width:1px;height:485px;background:#2a2a2a"></div>
<div class="a" style="left:403px;top:37px;width:60px;height:461px;background:#fde6fe"></div>
<div class="a" style="left:432px;top:37px;width:2px;height:461px;background:#fce2ea"></div>
<div class="a" style="left:403px;top:37px;width:1px;height:461px;background:#fadee2"></div>
<div class="a" style="left:475px;top:37px;width:60px;height:461px;background:#fde6fe"></div>
<div class="a" style="left:504px;top:37px;width:2px;height:461px;background:#fce2ea"></div>
<div class="a" style="left:475px;top:37px;width:1px;height:461px;background:#fadee2"></div>
<div class="a" style="left:547px;top:37px;width:53px;height:461px;background:#fde6fe"></div>
<div class="a" style="left:576px;top:37px;width:2px;height:461px;background:#fce2ea"></div>
<div class="a" style="left:547px;top:37px;width:1px;height:461px;background:#fadee2"></div>
<div class="a" style="left:371px;top:208px;width:229px;height:1px;background:#fad8d4"></div>
<div class="a" style="left:371px;top:449px;width:229px;height:1px;background:#fad8d4"></div>
<div class="a" style="left:371px;top:498px;width:229px;height:1px;background:#fad8d4"></div>
<div class="a" style="left:403px;top:498px;width:1px;height:24px;background:#fadede"></div>
<div class="a" style="left:276px;top:521px;width:324px;height:1px;background:#d2d2d2"></div></div></body></html>
